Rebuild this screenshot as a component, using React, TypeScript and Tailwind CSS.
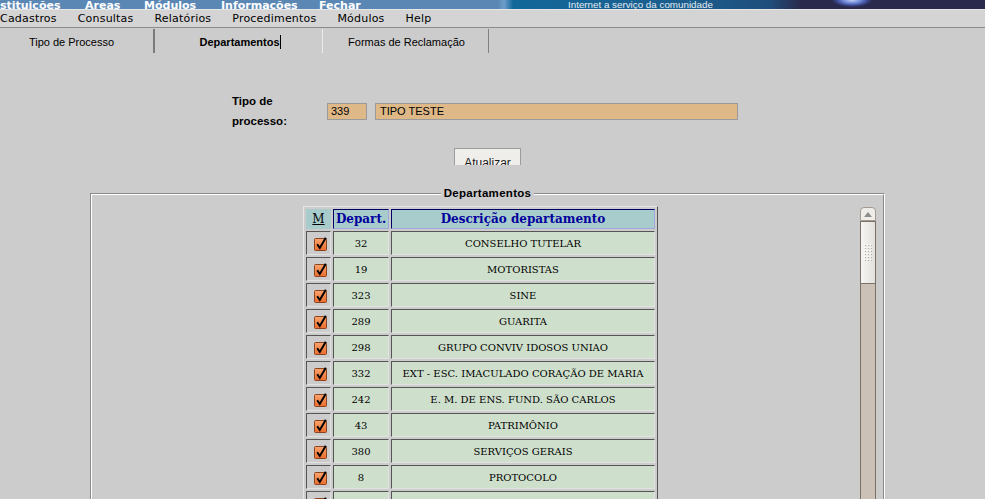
const departamentos = [
  { id: 32, nome: "CONSELHO TUTELAR" },
  { id: 19, nome: "MOTORISTAS" },
  { id: 323, nome: "SINE" },
  { id: 289, nome: "GUARITA" },
  { id: 298, nome: "GRUPO CONVIV IDOSOS UNIAO" },
  { id: 332, nome: "EXT - ESC. IMACULADO CORAÇÃO DE MARIA" },
  { id: 242, nome: "E. M. DE ENS. FUND. SÃO CARLOS" },
  { id: 43, nome: "PATRIMÔNIO" },
  { id: 380, nome: "SERVIÇOS GERAIS" },
  { id: 8, nome: "PROTOCOLO" },
  { id: 11, nome: "ALMOXARIFADO" },
];

function Checkbox() {
  return (
    <svg width="14" height="15" viewBox="0 0 14 15" className="block">
      <defs>
        <linearGradient id="cbFill" x1="0" y1="0" x2="0" y2="1">
          <stop offset="0" stopColor="#fca56f" />
          <stop offset="1" stopColor="#ea6c2c" />
        </linearGradient>
      </defs>
      <rect x="0.5" y="1.5" width="12" height="12" rx="1" fill="url(#cbFill)" stroke="#8a4520" />
      <path d="M3.2 7.2 L5.8 11 L11.8 0.8" fill="none" stroke="#000" strokeWidth="2" />
    </svg>
  );
}

function Scrollbar() {
  return (
    <div className="mt-[1px] flex w-[16px] flex-col">
      <div className="flex h-[14px] items-center justify-center rounded-t-[4px] border border-[#a39a8f] bg-[#efedea]">
        <svg width="8" height="5" viewBox="0 0 8 5">
          <path d="M0 5 L4 0 L8 5 Z" fill="#8d8d8d" />
        </svg>
      </div>
      <div className="flex h-[63px] flex-col items-center justify-center border border-[#7c7266] bg-[linear-gradient(90deg,#f6f5f3,#e4e1dd)]">
        <svg width="9" height="18" viewBox="0 0 9 18">
          {[0, 1, 2, 3, 4, 5].map((r) =>
            [0, 1, 2].map((c) => (
              <g key={`${r}-${c}`}>
                <rect x={c * 3 + 1} y={r * 3 + 1} width="1" height="1" fill="#b5aea6" />
                <rect x={c * 3} y={r * 3} width="1" height="1" fill="#ffffff" />
              </g>
            ))
          )}
        </svg>
      </div>
      <div className="flex-1 border-x border-[#7c7266] bg-[#cbc1b7]" />
    </div>
  );
}

export default function App() {
  return (
    <div className="h-[499px] overflow-hidden bg-[#cccccc] font-['Liberation_Sans',Arial,sans-serif] text-black">
      {/* banner */}
      <div className="h-[10px] overflow-hidden border-b border-[#e6e6e6] bg-[radial-gradient(ellipse_20px_7px_at_852px_0px,#c4d2f4,#6d86d6_45%,#3d4c98_75%,transparent_100%),linear-gradient(90deg,#5b87b5_0px,#5b87b5_498px,#6e9ecb_504px,#12689a_513px,#1b5d8c_690px,#1f4d7b_770px,#2a2a4c_800px,#2a2a4c_100%)]">
        <div className="-ml-[12px] flex items-start">
          <div className="flex font-['DejaVu_Sans',sans-serif] text-[11px] font-bold leading-[11px] text-white">
            <span className="w-[97px]">Instituições</span>
            <span className="w-[59px]">Areas</span>
            <span className="w-[77px]">Módulos</span>
            <span className="w-[98px]">Informações</span>
            <span className="w-[249px]">Fechar</span>
          </div>
          <span className="text-[9.8px] leading-[9px] text-[#e3ebf2]">Internet a serviço da comunidade</span>
        </div>
      </div>

      {/* menu */}
      <div className="flex h-[18px] gap-[21px] border-b border-[#8c8c8c] bg-[#d4d4d4] font-['DejaVu_Sans',sans-serif] text-[11px] leading-[17px] tracking-[0.2px]">
        <span>Cadastros</span>
        <span>Consultas</span>
        <span>Relatórios</span>
        <span>Procedimentos</span>
        <span>Módulos</span>
        <span>Help</span>
      </div>

      {/* tabs */}
      <div className="mt-[1px] flex h-[24px] text-[11px] leading-[21px]">
        <div className="w-[155px] border-r-2 border-[#7a7a7a] pt-[3px] pr-[10px] text-center">Tipo de Processo</div>
        <div className="w-[167px] pt-[3px] pl-[3px] text-center font-bold">
          Departamentos
          <span className="inline-block h-[14px] w-px bg-black align-[-3px]" />
        </div>
        <div className="w-[167px] border-x border-l-[#ececec] border-r-[#808080] pt-[3px] pl-[2px] text-center">
          Formas de Reclamação
        </div>
      </div>

      {/* form */}
      <div className="mt-[38px] ml-[232px] flex items-center">
        <div className="w-[95px] text-[11.5px] leading-[20px] font-bold">
          Tipo de
          <br />
          processo:
        </div>
        <div className="h-[17px] w-[40px] border border-[#9a9a9a] bg-[#deb887] pl-[3px] text-[11px] leading-[15px]">339</div>
        <div className="ml-[8px] h-[17px] w-[363px] border border-[#9a9a9a] bg-[#deb887] pl-[4px] text-[11px] leading-[15px]">
          TIPO TESTE
        </div>
      </div>

      <div className="mt-[17px] flex h-[17px] justify-center overflow-hidden pr-[10px]">
        <button className="h-[24px] w-[67px] border border-[#9c9c9c] bg-[#f0eeeb] pt-[6px] text-[12px] leading-[14px] text-[#1a1a1a]">
          Atualizar
        </button>
      </div>

      {/* fieldset */}
      <div className="mt-[28px] ml-[90px] w-[795px] border border-[#8a8a8a] border-r-white border-b-white">
        <div className="border border-white border-r-[#8a8a8a] border-b-[#8a8a8a]">
          <div className="-mt-[9px] flex justify-center">
            <span className="bg-[#cccccc] px-[3px] text-[11.5px] leading-[15px] font-bold tracking-[0.3px]">Departamentos</span>
          </div>
          <div className="flex pt-[5px] pr-[7px]">
            <div className="flex flex-1 justify-center pl-[9px]">
              <table className="w-[355px] table-fixed border-separate border-spacing-[2px] border border-t-[#e6e6e6] border-l-[#e6e6e6] border-r-[#555] border-b-[#555] font-['DejaVu_Serif',serif]">
                <thead>
                  <tr>
                    <th className="h-[20px] w-[25px] border border-[#a8cccc] bg-[#a8cccc] text-[12px] font-normal underline">M</th>
                    <th className="h-[20px] w-[56px] border border-t-[#000066] border-l-[#000066] border-r-[#9ea8dc] border-b-[#9ea8dc] bg-[#a8cccc] text-[12px] font-bold text-[#00009c]">
                      Depart.
                    </th>
                    <th className="h-[20px] border border-t-[#000066] border-l-[#000066] border-r-[#9ea8dc] border-b-[#9ea8dc] bg-[#a8cccc] text-[12px] font-bold text-[#00009c]">
                      Descrição departamento
                    </th>
                  </tr>
                </thead>
                <tbody>
                  {departamentos.map((d) => (
                    <tr key={d.id}>
                      <td className="h-[24px] border border-t-[#555] border-l-[#555] border-r-[#e2e2e2] border-b-[#e2e2e2] pt-[3px] pl-[5px]">
                        <div className="flex justify-center">
                          <Checkbox />
                        </div>
                      </td>
                      <td className="h-[24px] border border-t-[#555] border-l-[#555] border-r-[#e2e2e2] border-b-[#e2e2e2] bg-[#cedfcc] text-center text-[10px] text-black">
                        {d.id}
                      </td>
                      <td className="h-[24px] border border-t-[#555] border-l-[#555] border-r-[#e2e2e2] border-b-[#e2e2e2] bg-[#cedfcc] text-center text-[10px] text-black">
                        {d.nome}
                      </td>
                    </tr>
                  ))}
                </tbody>
              </table>
            </div>
            <Scrollbar />
          </div>
        </div>
      </div>
    </div>
  );
}
